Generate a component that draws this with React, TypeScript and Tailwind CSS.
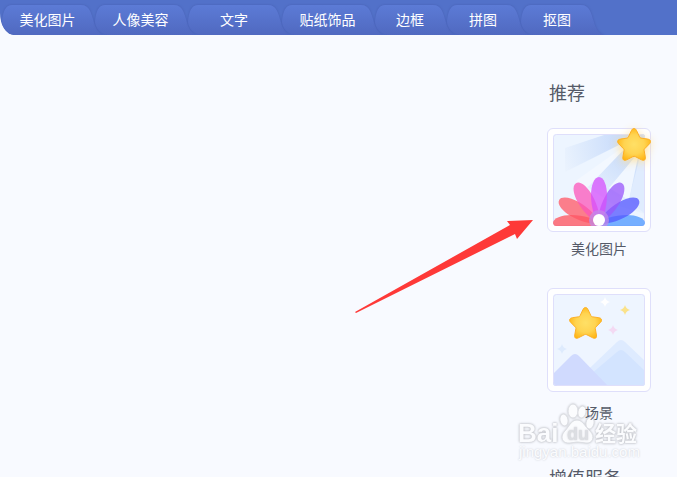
const TABS = [
  { label: '美化图片', width: 93, box: 'w-[93px]' },
  { label: '人像美容', width: 93, box: 'w-[93px]' },
  { label: '文字', width: 94, box: 'w-[94px]' },
  { label: '贴纸饰品', width: 93, box: 'w-[93px]' },
  { label: '边框', width: 72, box: 'w-[72px]' },
  { label: '拼图', width: 74, box: 'w-[74px]' },
  { label: '抠图', width: 74, box: 'w-[74px]' },
];

const STAR =
  'M17 1.500c1.200 0 2 .8 2.600 2.200l3 6.300c.3.700.7 1 1.400 1.100l6.800 1c3 .5 3.700 2.800 1.600 4.800l-4.700 4.800c-.5.500-.7 1-.6 1.600l1.200 6.600c.5 3-1.200 4.200-3.800 2.900l-6.200-3.200c-.8-.4-1.600-.4-2.400 0l-6.200 3.200c-2.600 1.300-4.300.1-3.800-2.900l1.200-6.600c.1-.6-.1-1.100-.6-1.600l-4.700-4.800C-.3 14.900.4 12.600 3.400 12.100l6.600-1c.7-.1 1.100-.4 1.400-1.100l3-6.300C15 2.300 15.800 1.500 17 1.500z';

const SPARKLE = 'M0-5Q1-1 5 0Q1 1 0 5Q-1 1-5 0Q-1-1 0-5z';

const PETAL =
  'M46 43C51 43 54 52 54 61C54 74 50 85 46 91C42 85 38 74 38 61C38 52 41 43 46 43z';

const PETALS = [
  { angle: -90, color: '#ff4f58' },
  { angle: 90, color: '#4c97ff' },
  { angle: -60, color: '#ff5664' },
  { angle: 60, color: '#5355ff' },
  { angle: -30, color: '#fb54ba' },
  { angle: 30, color: '#9855fb' },
  { angle: 0, color: '#d54ffc' },
];

const Defs = () => (
  <svg className="absolute size-0" aria-hidden="true">
    <defs>
      <linearGradient id="tab" x1="0" y1="0" x2="0" y2="1">
        <stop offset="0" stopColor="#5c7bd6" />
        <stop offset="1" stopColor="#5069c0" />
      </linearGradient>
      <radialGradient id="star" cx=".5" cy=".5" r=".55">
        <stop offset="0" stopColor="#ffe066" />
        <stop offset=".55" stopColor="#ffd451" />
        <stop offset="1" stopColor="#ffb514" />
      </radialGradient>
      <radialGradient id="shade" gradientUnits="userSpaceOnUse" cx="84" cy="6" r="80">
        <stop offset="0" stopColor="#bfd5fa" />
        <stop offset=".5" stopColor="#d6e5fc" />
        <stop offset="1" stopColor="#ecf4fe" />
      </radialGradient>
      <clipPath id="flower">
        <rect width="92" height="92" rx="3" />
      </clipPath>
    </defs>
  </svg>
);

type TabProps = { label: string; width: number; box: string };

const Tab = ({ label, width: w, box }: TabProps) => (
  <button type="button" className={`relative h-[30px] pb-[2px] text-sm text-white ${box}`}>
    <svg
      className="absolute top-0 left-px -z-10 h-[30px] overflow-visible drop-shadow-[0_0_1px_#4860b4]"
      width={w + 12}
      height="30"
      aria-hidden="true"
    >
      <path
        d={`M10 0H${w - 14}C${w - 5} 0 ${w - 4} 8 ${w - 1} 17C${w + 1} 24 ${w + 4} 29 ${w + 10} 30H12C4 28 0 22 0 16C1 7 3 0 10 0z`}
        fill="url(#tab)"
      />
    </svg>
    {label}
  </button>
);

const Star = ({ className }: { className: string }) => (
  <svg className={className} viewBox="0 0 34 34" aria-hidden="true">
    <path d={STAR} fill="url(#star)" stroke="#fcae25" strokeWidth="1" />
  </svg>
);

const Frame = () => (
  <rect x="0.5" y="0.5" width="91" height="91" rx="3" fill="none" stroke="#dfdffb" />
);

const FlowerArt = () => (
  <svg viewBox="0 0 92 92" className="block size-full" aria-hidden="true">
    <g clipPath="url(#flower)">
      <rect width="92" height="92" fill="#edf5ff" />
      <path d="M92 0H54L12 14V38L33 52L60 70L92 80z" fill="url(#shade)" />
      <path d="M80 4L12 38V52L24 60z" fill="#edf5ff" />
      <path d="M80 6L24 46L20 62L36 52z" fill="#f3f8ff" />
      <path d="M86 18L56 54L76 66z" fill="#f1f7ff" />
      <path d="M88 18L76 66L92 80V18z" fill="#e0ecfe" />
      <Frame />
      {PETALS.map((petal) => (
        <path
          key={petal.angle}
          d={PETAL}
          transform={`rotate(${petal.angle} 46 89)`}
          fill={petal.color}
          fillOpacity=".75"
        />
      ))}
    </g>
    <circle cx="46" cy="86" r="10" fill="#c28be8" fillOpacity=".75" />
    <circle cx="46" cy="86" r="6" fill="#fff" />
  </svg>
);

const SceneArt = () => (
  <svg viewBox="0 0 92 92" className="block size-full rounded-[3px]" aria-hidden="true">
    <rect width="92" height="92" fill="#eef5ff" />
    <path d="M18 92L64 48Q68 44 72 48L92 67V92z" fill="#deebff" />
    <path d="M30 92L38 80L64 58Q68 54 72 58L92 77V92z" fill="#d3e4ff" />
    <path d="M0 80L18 62Q22 58 26 62L55 92H0z" fill="#d0dafe" />
    <path d={SPARKLE} transform="translate(52 8)" fill="#fff" />
    <path d={SPARKLE} transform="translate(72 16)" fill="#fae28b" />
    <path d={SPARKLE} transform="translate(60 36)" fill="#f3daf3" />
    <path d={SPARKLE} transform="translate(9 55)" fill="#deebfd" />
    <Frame />
  </svg>
);

const FRAME =
  'relative block size-[104px] rounded-md border border-[#dfdffb] bg-white p-[5px]';

const Arrow = () => (
  <svg
    className="absolute top-[219px] left-[355px] h-[95px] w-[179px]"
    viewBox="0 0 179 95"
    aria-hidden="true"
  >
    <path d="M178 1L162 20L160 15L1 94L0 93L155 6L152 2z" fill="#fe3938" />
  </svg>
);

const Watermark = () => (
  <div
    className="pointer-events-none absolute top-[404px] left-[519px] font-['Liberation_Sans','Noto_Sans_CJK_SC',sans-serif] text-[#fbfcfe] [text-shadow:0_0_2px_#c4c6cc]"
    aria-hidden="true"
  >
    <svg
      className="block h-[40px] w-[120px] overflow-visible drop-shadow-[0_0_1px_#c4c6cc]"
      viewBox="0 0 120 40"
    >
      <g fill="#fbfcfe" stroke="#dcdee3" strokeWidth="1">
        <ellipse cx="45" cy="16" rx="4" ry="6" transform="rotate(-12 45 16)" />
        <ellipse cx="54" cy="7" rx="5" ry="7" />
        <ellipse cx="63" cy="8" rx="4" ry="6" transform="rotate(12 63 8)" />
        <ellipse cx="71" cy="19" rx="4" ry="6" transform="rotate(12 71 19)" />
        <path d="M58 16C64 16 66 23 71 27C77 33 73 40 67 39Q58 37 51 39C43 40 41 33 45 28C50 23 52 16 58 16z" />
      </g>
      <text x="-1" y="38" className="text-[26px] font-bold" fill="#fbfcfe">Bai</text>
      <text x="76" y="37" className="text-[21px] font-bold" fill="#fbfcfe">经验</text>
      <text x="48" y="36" className="text-lg font-bold" fill="#dcdee2">du</text>
    </svg>
    <p className="text-[15px] leading-4">jingyan.baidu.com</p>
  </div>
);

const App = () => {
  return (
    <div className="relative h-screen overflow-hidden bg-[#f8faff] font-['Noto_Sans_CJK_SC',sans-serif] text-[#555a68]">
      <Defs />
      <Watermark />
      <nav className="isolate flex h-[35px] flex-row overflow-hidden rounded-bl-[14px_22px] bg-[#5271c9] pt-[5px] pl-px">
        {TABS.map((tab) => (
          <Tab key={tab.label} {...tab} />
        ))}
      </nav>
      <aside className="relative ml-auto flex w-[130px] flex-col pt-[45px]">
        <h2 className="pl-[2px] text-lg leading-6">推荐</h2>
        <button type="button" className="mt-6 w-[104px] text-sm">
          <span className={FRAME}>
            <FlowerArt />
            <Star className="absolute -top-[2px] -right-px size-[34px] drop-shadow-[0_2px_5px_#ffdf96]" />
          </span>
          <span className="mt-[5px] block leading-[22px]">美化图片</span>
        </button>
        <button type="button" className="mt-[29px] w-[104px] text-sm">
          <span className={FRAME}>
            <SceneArt />
            <Star className="absolute top-[17px] left-[21px] size-[33px]" />
          </span>
          <span className="mt-[9px] block leading-[22px]">场景</span>
        </button>
        <h2 className="mt-[42px] pl-[2px] text-lg leading-6">增值服务</h2>
      </aside>
      <Arrow />
    </div>
  );
};

export default App;
